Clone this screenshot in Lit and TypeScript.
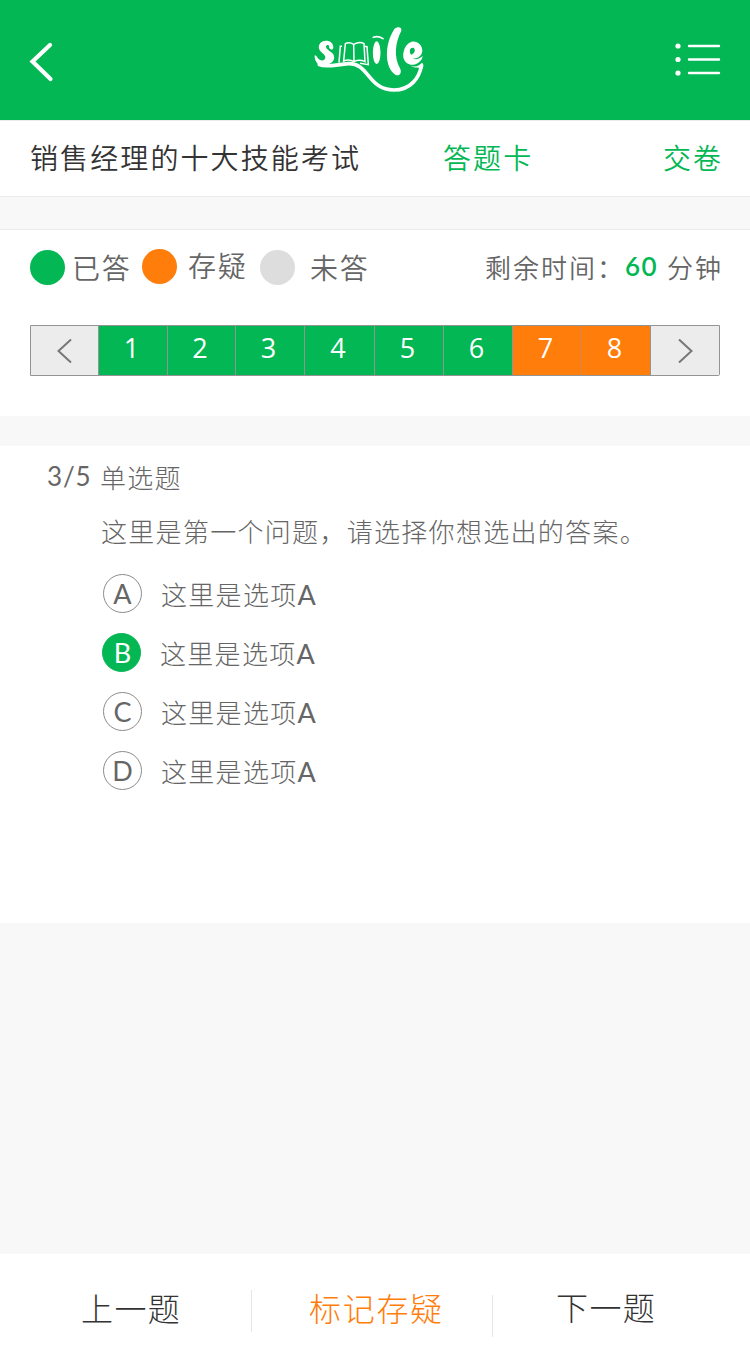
import { LitElement, html, css, svg } from "lit";
import { customElement, state } from "lit/decorators.js";
import { classMap } from "lit/directives/class-map.js";

type Mark = "done" | "doubt";

@customElement("app-root")
export class AppRoot extends LitElement {
  @state() private selected = "B";

  private questions: { n: number; mark: Mark }[] = [1, 2, 3, 4, 5, 6, 7, 8].map((n) => ({
    n,
    mark: n > 6 ? "doubt" : "done",
  }));

  static styles = css`
    :host {
      display: flex;
      flex-direction: column;
      width: 750px;
      height: 1354px;
      background: #f8f8f8;
      color: #666;
      font-family: "Noto Sans CJK SC", sans-serif;
      font-weight: 350;
      overflow: hidden;
    }
    * { box-sizing: border-box; }
    svg { display: block; flex: none; }
    button {
      border: 0;
      padding: 0;
      margin: 0;
      background: none;
      color: inherit;
      font: inherit;
      letter-spacing: inherit;
      white-space: nowrap;
    }
    .top {
      flex: none;
      height: 120px;
      background: #03b754;
      display: grid;
      grid-template-columns: 300px 140px 1fr;
      align-items: start;
      justify-items: start;
    }
    .back { padding: 41px 0 0 26px; }
    .logo { padding-top: 15px; }
    .menu { padding: 41px 0 0 234px; }
    .titlebar {
      flex: none;
      height: 77px;
      border-top: 1px solid #ebebeb;
      border-bottom: 1px solid #ebebeb;
      background: #fff;
      display: grid;
      grid-template-columns: 413px 220px 1fr;
      align-items: center;
      justify-items: start;
      padding: 0 0 4px 30px;
      font-size: 28px;
      line-height: 40px;
      letter-spacing: 2.1px;
    }
    .name { color: #333; }
    .link { color: #03b754; }
    .status {
      flex: none;
      margin-top: 32px;
      height: 187px;
      border-top: 1px solid #ebebeb;
      background: #fff;
      padding: 19px 30px 0;
    }
    .legend { display: flex; height: 76px; align-items: flex-start; }
    .key { display: flex; flex: none; align-items: center; height: 36px; font-size: 28px; line-height: 36px; letter-spacing: 1.8px; white-space: nowrap; }
    .key.a { width: 112px; gap: 7px; }
    .key.b { width: 118px; gap: 11px; margin-top: -1px; }
    .key.c { width: 125px; gap: 15px; }
    .dot { width: 35px; height: 35px; border-radius: 50%; flex: none; }
    .dot.green { background: #03b754; }
    .dot.orange { background: #ff7d0a; }
    .dot.grey { background: #ddd; }
    .key.b .word { padding-bottom: 2px; }
    .time {
      display: flex;
      flex: none;
      margin-left: 100px;
      height: 34px;
      font-size: 26px;
      line-height: 36px;
      letter-spacing: 2px;
      white-space: nowrap;
    }
    .label { width: 140px; flex: none; }
    .num {
      width: 42px;
      flex: none;
      color: #03b754;
      font: 600 26px/34px Lato, sans-serif;
      letter-spacing: 1.5px;
    }
    .pager {
      display: grid;
      grid-template-columns: 68px 69px 68px 69px 70px 69px 69px 69px 69px 68px;
      height: 51px;
      border: 1px solid #949494;
      border-radius: 0 0 2px 0;
    }
    .cell {
      border-right: 1px solid #949494;
      color: #fff;
      font: 500 27px/44px "Open Sans", sans-serif;
      text-align: center;
      padding-right: 3px;
    }
    .cell.done { background: #03b754; }
    .cell.doubt { background: #ff7d0a; }
    .cell.soft { border-right-color: #d08a4d; }
    .cell.step {
      background: #ececec;
      display: flex;
      align-items: center;
      justify-content: center;
      padding: 0;
    }
    .cell.step:last-child { border-right: 0; }
    .quiz {
      flex: none;
      margin-top: 30px;
      height: 477px;
      background: #fff;
      padding: 12px 47px 0;
      font-size: 26px;
      font-weight: 300;
      line-height: 37px;
      letter-spacing: 1.3px;
    }
    .kind { display: flex; height: 54px; }
    .count { width: 53px; flex: none; font: 400 26px/36px Lato, sans-serif; letter-spacing: 0.8px; }
    .ask { padding-left: 54px; height: 62px; white-space: nowrap; }
    .opt { display: flex; align-items: flex-start; height: 59px; padding-left: 56px; gap: 19px; }
    .opt.on { padding-left: 55px; }
    .opt .text { padding-top: 1px; }
    .ring {
      width: 39px;
      height: 39px;
      border: 1px solid #8c8c8c;
      border-radius: 50%;
      font: 400 27px/37px Lato, sans-serif;
      letter-spacing: 0;
      text-align: center;
      flex: none;
    }
    .on .ring { background: #03b754; border-color: #03b754; color: #fff; padding-left: 2px; }
    .latin { font-family: Lato, sans-serif; font-size: 27px; font-weight: 400; line-height: 30px; }
    .bottom {
      margin-top: auto;
      flex: none;
      height: 100px;
      background: #fff;
      display: grid;
      grid-template-columns: 251px 1px 240px 1px 257px;
      font-size: 32px;
      line-height: 48px;
      letter-spacing: 1.4px;
      font-weight: 300;
      color: #333;
      padding-top: 29px;
      align-items: start;
    }
    .bottom button { justify-self: start; }
    .prev { margin-left: 81px; }
    .flag { margin-left: 57px; color: #ff7d0a; letter-spacing: 1.7px; }
    .next { margin-left: 63px; margin-top: -1px; }
    .rule { background: #e6e6e6; height: 42px; margin-top: 7px; }
    .rule.low { margin-top: 12px; }
  `;

  private arrow(d: string) {
    return html`<svg width="18" height="26" viewBox="0 0 18 26" fill="none" stroke="#777" stroke-width="2">${svg`<path d=${d} />`}</svg>`;
  }

  render() {
    return html`
      <header class="top">
        <button class="back" aria-label="返回">
          <svg width="30" height="42" viewBox="0 0 30 42" fill="none" stroke="#fff" stroke-width="4.2" stroke-linecap="round" stroke-linejoin="miter">
            <path d="M24 4 L6.5 20.5 L24.5 38" />
          </svg>
        </button>
        <div class="logo">
          <svg width="140" height="90" viewBox="0 0 420 270" fill="none" stroke="#fff" stroke-linecap="round">
            <path fill="#fff" stroke="none" d="M100 99 C101 84 90 76 77 77 C62 78 54 89 57 101 C61 112 75 117 76 126 C77 137 62 141 53 129 C48 120 43 118 44 126 C46 142 56 154 73 156 L84 148 C99 145 107 131 100 118 C94 109 78 103 78 95 C79 89 87 89 87 94 C86 103 97 108 100 99 Z" />
            <path stroke-width="11" d="M58 149 C80 158 112 148 145 146 C207 143 203 225 282 225 C332 225 358 188 364 153" />
            <path fill="#fff" stroke="none" d="M331 151 C345 160 357 151 366 143 C372 147 371 155 367 162 C359 155 344 163 331 151 Z" />
            <path stroke-width="4.5" stroke-linecap="butt" d="M126 94 L121 94 L117 143 M136 86 Q148 80 161 88 Q179 78 192 86 L195 140 Q178 132 162 140 Q147 131 131 138 Z M161 87 L162 140 M194 94 L201 95 L205 149 L180 145" />
            <path stroke-width="5" d="M220 67 Q234 61 249 71" />
            <ellipse cx="230" cy="113" rx="11.5" ry="34" fill="#fff" stroke="none" />
            <path fill="#fff" stroke="none" d="M283 42 C292 34 306 35 304 47 C286 83 280 124 301 162 C306 176 297 185 286 179 C255 160 251 91 283 42 Z" />
            <path fill="#fff" fill-rule="evenodd" stroke="none" d="M367 106 C366 88 350 76 335 80 C316 86 308 109 310 127 C315 151 338 153 350 146 C360 142 367 133 368 123 C359 131 347 137 339 130 C353 133 367 122 367 106 Z M333 119 C325 107 332 96 341 99 C348 103 344 116 333 119 Z" />
          </svg>
        </div>
        <button class="menu" aria-label="菜单">
          <svg width="48" height="38" viewBox="0 0 48 38" fill="#fff" stroke="#fff">
            <g stroke="none"><circle cx="4" cy="5" r="2.6" /><circle cx="4" cy="18.5" r="2.6" /><circle cx="4" cy="32" r="2.6" /></g>
            <path fill="none" stroke-width="2.4" stroke-linecap="round" d="M15 5 H45 M15 18.5 H45 M15 32 H45" />
          </svg>
        </button>
      </header>

      <section class="titlebar">
        <span class="name">销售经理的十大技能考试</span>
        <button class="link">答题卡</button>
        <button class="link">交卷</button>
      </section>

      <section class="status">
        <div class="legend">
          <div class="key a"><i class="dot green"></i><span class="word">已答</span></div>
          <div class="key b"><i class="dot orange"></i><span class="word">存疑</span></div>
          <div class="key c"><i class="dot grey"></i><span class="word">未答</span></div>
          <div class="time"><span class="label">剩余时间：</span><span class="num">60</span><span>分钟</span></div>
        </div>
        <div class="pager">
          <div class="cell step">${this.arrow("M15 1.5 L2.5 13 L15 24.5")}</div>
          ${this.questions.map(
            (q) => html`<div class=${classMap({ cell: true, [q.mark]: true, soft: q.n === 7 })}>${q.n}</div>`
          )}
          <div class="cell step">${this.arrow("M3 1.5 L15.5 13 L3 24.5")}</div>
        </div>
      </section>

      <section class="quiz">
        <div class="kind"><span class="count">3/5</span><span>单选题</span></div>
        <div class="ask">这里是第一个问题，请选择你想选出的答案。</div>
        ${["A", "B", "C", "D"].map(
          (k) => html`<div class=${classMap({ opt: true, on: k === this.selected })} @click=${() => (this.selected = k)}>
            <span class="ring">${k}</span><span class="text">这里是选项<span class="latin">A</span></span>
          </div>`
        )}
      </section>

      <footer class="bottom">
        <button class="prev">上一题</button>
        <i class="rule"></i>
        <button class="flag">标记存疑</button>
        <i class="rule low"></i>
        <button class="next">下一题</button>
      </footer>
    `;
  }
}
